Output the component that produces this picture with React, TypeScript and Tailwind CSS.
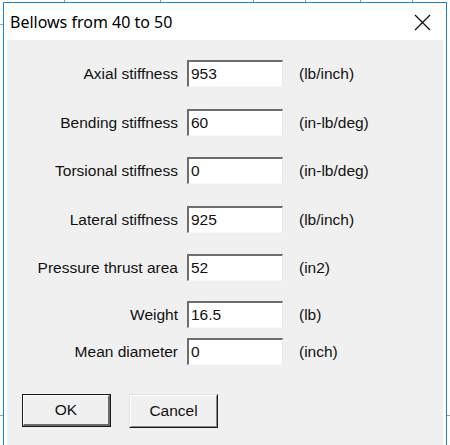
import React from "react";

interface FieldRow {
    label: string;
    value: string;
    unit: string;
    mt: string;
}

const rows: FieldRow[] = [
    { label: "Axial stiffness", value: "953", unit: "(lb/inch)", mt: "mt-[20px]" },
    { label: "Bending stiffness", value: "60", unit: "(in-lb/deg)", mt: "mt-[22px]" },
    { label: "Torsional stiffness", value: "0", unit: "(in-lb/deg)", mt: "mt-[21px]" },
    { label: "Lateral stiffness", value: "925", unit: "(lb/inch)", mt: "mt-[22px]" },
    { label: "Pressure thrust area", value: "52", unit: "(in2)", mt: "mt-[21px]" },
    { label: "Weight", value: "16.5", unit: "(lb)", mt: "mt-[20px]" },
    { label: "Mean diameter", value: "0", unit: "(inch)", mt: "mt-[10px]" },
];

const tickXs = [64, 160, 253, 305, 360, 412];

const Field = ({ row }: { row: FieldRow }) => (
    <div className={`flex items-center ${row.mt}`}>
        <div className="w-[180px] text-right pr-[9px] whitespace-nowrap">{row.label}</div>
        <div className="w-[96px] h-[27px] border-t-2 border-l-2 border-t-[#6d6d6d] border-l-[#6d6d6d] border-b border-r border-b-[#f8f8f8] border-r-[#e8e8e8] bg-white flex items-center pl-[2px]">
            {row.value}
        </div>
        <div className="pl-[16px]">{row.unit}</div>
    </div>
);

const App = () => {
    return (
        <div className="relative w-[450px] h-[445px] bg-white overflow-hidden">
            {tickXs.map((x) => (
                <div
                    key={x}
                    className="absolute top-0 w-px h-[2px] bg-[#9a9a9a]"
                    style={{ left: x }}
                />
            ))}
            <div className="absolute left-0 top-[24px] w-[3px] h-px bg-[#a0a0a0]" />
            <div className="absolute left-0 top-[415px] w-[3px] h-px bg-[#a0a0a0]" />
            <div className="absolute right-0 top-[415px] w-[3px] h-px bg-[#a0a0a0]" />

            <div className="ml-[3px] mt-[2px] w-[444px] h-[460px] border border-[#1883d7] bg-white flex flex-col">
                <div className="h-[37px] flex items-center justify-between pl-[6px] pr-[15px] font-['Noto_Sans',sans-serif] text-[16px] text-black">
                    <span className="mt-[1px]">Bellows from 40 to 50</span>
                    <svg width="17" height="17" viewBox="0 0 17 17" className="mt-[2px]">
                        <path d="M1 1 L16 16 M16 1 L1 16" stroke="#111" strokeWidth="1.3" />
                    </svg>
                </div>
                <div className="flex-1 mx-[3px] bg-[#f0f0f0] font-['Liberation_Sans',Arial,sans-serif] text-[15.5px] text-[#111]">
                    {rows.map((row) => (
                        <Field key={row.label} row={row} />
                    ))}
                    <div className="flex mt-[29px] ml-[15px] gap-[18px]">
                        <button className="w-[89px] h-[33px] border border-[#1a1a1a] bg-[#f0f0f0] flex">
                            <span className="flex-1 flex items-center justify-center border-t border-l border-t-white border-l-white border-b-2 border-r-2 border-b-[#6a6a6a] border-r-[#6a6a6a]">
                                OK
                            </span>
                        </button>
                        <button className="w-[89px] h-[34px] border-t border-l border-t-[#e3e3e3] border-l-[#e3e3e3] border-b border-r border-b-[#1a1a1a] border-r-[#1a1a1a] bg-[#f0f0f0] flex">
                            <span className="flex-1 flex items-center justify-center border-t border-l border-t-white border-l-white border-b border-r border-b-[#8a8a8a] border-r-[#8a8a8a]">
                                Cancel
                            </span>
                        </button>
                    </div>
                </div>
            </div>
        </div>
    );
};

export default App;
